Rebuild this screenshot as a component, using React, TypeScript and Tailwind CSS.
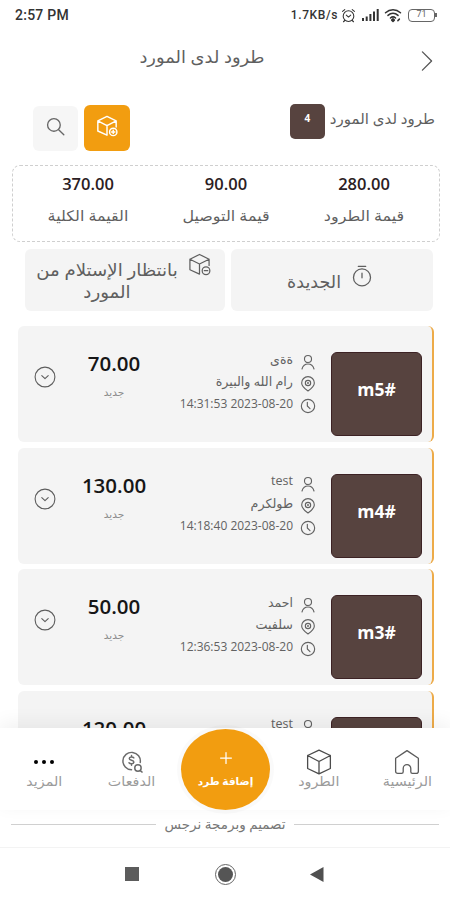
import type { ReactNode } from "react";

interface IParcel {
    id: string;
    customer: string;
    city?: string;
    date?: string;
    price: string;
    status?: string;
}

const parcels: IParcel[] = [
    { id: "#m5", customer: "ةةى", city: "رام الله والبيرة", date: "2023-08-20 14:31:53", price: "70.00", status: "جديد" },
    { id: "#m4", customer: "test", city: "طولكرم", date: "2023-08-20 14:18:40", price: "130.00", status: "جديد" },
    { id: "#m3", customer: "احمد", city: "سلفيت", date: "2023-08-20 12:36:53", price: "50.00", status: "جديد" },
    { id: "", customer: "test", price: "120.00" },
];

const totals = [
    { value: "280.00", label: "قيمة الطرود" },
    { value: "90.00", label: "قيمة التوصيل" },
    { value: "370.00", label: "القيمة الكلية" },
];

function Icon({ className, width = 1.3, children }: { className: string; width?: number; children: ReactNode }) {
    return (
        <svg
            viewBox="0 0 24 24"
            className={`shrink-0 ${className}`}
            fill="none"
            stroke="currentColor"
            strokeWidth={width}
            strokeLinecap="round"
            strokeLinejoin="round"
        >
            {children}
        </svg>
    );
}

function BoxBadgeIcon({ className, minus, width }: { className: string; minus?: boolean; width?: number }) {
    return (
        <Icon className={className} width={width}>
            <path d="M12 22 2 17.5V6.5L12 1.5l10 5V13M2 6.5l10 5 10-5M12 11.5V22" />
            <circle cx="18.8" cy="18.5" r="4" />
            <path d={minus ? "M17 18.5h3.6" : "M17 18.5h3.6M18.8 16.7v3.6"} />
        </Icon>
    );
}

function StatusBar() {
    return (
        <div dir="ltr" className="flex h-[30px] shrink-0 items-center justify-between pr-[13px] pl-[15px] font-['Roboto'] text-[#333]">
            <span className="text-[14px] font-medium tracking-[0.25px]">2:57 PM</span>
            <div className="flex items-center">
                <span className="text-[12px] font-medium tracking-[0.6px]">1.7KB/s</span>
                <Icon className="ml-[3px] size-[15px]" width={1.7}>
                    <circle cx="12" cy="13" r="8.5" />
                    <path d="m8.5 11.5 3.5 3 3.5-3M2.5 5.5 6 2.5M21.500 5.500 18 2.500M6 20l-2 2M18 20l2 2" />
                </Icon>
                <svg viewBox="0 0 17 12" className="ml-[6px] h-[12px] w-[17px]" fill="#333">
                    <path d="M0 9h2v3H0zM3.700 7.500h2v4.500h-2zM7.400 5h2v7h-2zM11 2.500h2v9.500h-2zM14.700 0h2v12h-2z" />
                </svg>
                <Icon className="ml-[5px] size-[18px]" width={2}>
                    <path d="M2 9c6-5.500 14-5.500 20 0M5.300 12.500c4-3.600 9.400-3.600 13.400 0M8.600 16c2-1.800 4.800-1.800 6.800 0" />
                    <path d="m12 17 1.800 1.800L12 20.500l-1.800-1.700z" fill="currentColor" />
                    <path d="m18.500 19.500 2-2" />
                </Icon>
                <div className="ml-[6px] flex h-[13px] w-[27px] items-center justify-center rounded-[4px] border-[1.5px] border-[#666] text-[9px] text-[#666]">
                    71
                </div>
                <div className="h-[4px] w-[2px] bg-[#666]" />
            </div>
        </div>
    );
}

function ParcelCard({ parcel }: { parcel: IParcel }) {
    return (
        <div className="flex h-[116px] shrink-0 rounded-[6px] border-r-2 border-[#edab49] bg-[#f4f4f4]">
            <div className="mt-[26px] mr-[10px] flex h-[84px] w-[91px] shrink-0 items-center justify-center rounded-[6px] border border-[#3c2224] bg-[#57433f] pb-[9px] text-[17.5px] font-bold text-white">
                {parcel.id}
            </div>
            <div className="mt-[23px] mr-[15px] w-[150px] text-[#626262]">
                <div className="flex h-[22px] items-center">
                    <Icon className="mt-[4px] size-[16px]" width={1.7}>
                        <circle cx="12" cy="7.500" r="5.300" />
                        <path d="M3 22.500c1.500-5.500 5-7.500 9-7.500s7.500 2 9 7.500" />
                    </Icon>
                    <span className="mr-[7px] text-[12.5px]">{parcel.customer}</span>
                </div>
                <div className="flex h-[22px] items-center">
                    <Icon className="mt-[4px] size-[16px]" width={1.7}>
                        <path d="M12 22.500C7 19 2.500 15.500 2.500 10.500a9.500 9.500 0 0 1 19 0c0 5-4.500 8.500-9.500 12z" />
                        <circle cx="12" cy="10.500" r="4" />
                        <circle cx="12" cy="10.500" r=".6" />
                    </Icon>
                    <span className="mr-[7px] text-[12.7px] whitespace-nowrap">{parcel.city}</span>
                </div>
                <div className="flex h-[22px] items-center">
                    <Icon className="mt-[4px] size-[16px]" width={1.7}>
                        <circle cx="12" cy="12" r="10" />
                        <path d="M11 6.500V12l4 4" />
                    </Icon>
                    <span className="mr-[7px] text-[12px] whitespace-nowrap">{parcel.date}</span>
                </div>
            </div>
            <div className="mr-[14px] w-[76px] pt-[21px] text-center">
                <div className="h-[32px] text-[20.500px] leading-[32px] font-semibold whitespace-nowrap text-[#161616]">{parcel.price}</div>
                <div className="mt-[4px] text-[10.5px] leading-[18px] text-[#8b8b8b]">{parcel.status}</div>
            </div>
            <Icon className="mt-[40px] mr-auto ml-[16px] size-[22px] text-[#5d5d5d]" width={1.2}>
                <circle cx="12" cy="12" r="10.800" />
                <path d="m8.500 10.500 3.500 3.300 3.500-3.300" />
            </Icon>
        </div>
    );
}

function NavItem({ label, children }: { label: string; children: ReactNode }) {
    return (
        <div className="flex w-[88px] flex-col items-center">
            <div className="flex h-[28px] items-center">{children}</div>
            <span className="-mt-[5px] scale-x-110 text-[13px] leading-[20px] text-[#9b9b9b]">{label}</span>
        </div>
    );
}

function BottomNav() {
    return (
        <nav className="relative z-10 flex h-[82px] shrink-0 bg-white pt-[20px] shadow-[0_-5px_18px_rgba(0,0,0,0.06)]">
            <div className="-mr-px flex w-[178px]">
                <NavItem label="الرئيسية">
                    <Icon className="size-[26px] text-[#5c5c5c]" width={1.2}>
                        <path d="M1.500 8.500 12 1.500l10.500 7v12q0 2-2 2H17q-1.500 0-1.500-1.500v-3a3.500 3.500 0 0 0-7 0v3q0 1.500-1.500 1.500H3.500q-2 0-2-2z" />
                    </Icon>
                </NavItem>
                <NavItem label="الطرود">
                    <Icon className="size-[26px] text-[#4c4c4c]" width={1.2}>
                        <path d="M12 1 22.500 6v12L12 23 1.500 18V6zM1.500 6 12 11.500 22.500 6M12 11.500V23" />
                    </Icon>
                </NavItem>
            </div>
            <div className="w-[97px]">
                <div className="absolute top-px left-[181px] flex h-[81px] w-[89px] flex-col items-center rounded-[50%] bg-[#f29d10] pt-[19px] text-white shadow-[0_0_0_4px_rgba(0,0,0,0.02)]">
                    <Icon className="size-[20px]" width={1.5}>
                        <path d="M12 5.500v13M5.500 12h13" />
                    </Icon>
                    <span className="mt-[3px] text-[10.5px] leading-[20px] font-bold">إضافة طرد</span>
                </div>
            </div>
            <div className="flex w-[176px]">
                <NavItem label="الدفعات">
                    <Icon className="size-[22px] text-[#6b6b6b]" width={1.6}>
                        <path d="M11.500 20.500a9.500 9.500 0 1 1 9.500-8M14 7.500c-1-1.500-5-1.500-5 .8 0 2.200 5 1.500 5 3.700 0 2.500-4 2.500-5.300.8M11.500 5v1.500M11.500 14v1.500" />
                        <circle cx="18.500" cy="18.500" r="3.500" />
                        <path d="m21 21.500 2 1.500" />
                    </Icon>
                </NavItem>
                <NavItem label="المزيد">
                    <div className="-mt-[1px] flex gap-[4px]">
                        <i className="size-[4px] rounded-full bg-black" />
                        <i className="size-[4px] rounded-full bg-black" />
                        <i className="size-[4px] rounded-full bg-black" />
                    </div>
                </NavItem>
            </div>
        </nav>
    );
}

function App() {
    return (
        <div dir="rtl" className="flex h-[900px] w-[450px] flex-col overflow-hidden bg-white font-['Open_Sans','DejaVu_Sans',sans-serif] text-[#5f5f5f]">
            <StatusBar />
            <header className="flex h-[58px] shrink-0 items-center">
                <div className="flex w-[46px] justify-center pt-[3px]">
                    <Icon className="size-[22px] text-[#555]" width={1.4}>
                        <path d="m7 2 10 10L7 22" />
                    </Icon>
                </div>
                <h1 className="flex-1 scale-x-105 pb-[4px] text-center text-[17px]">طرود لدى المورد</h1>
            </header>
            <div className="flex h-[77px] shrink-0 items-start pr-[15px]">
                <span className="mt-[19px] text-[15px] leading-[22px]">طرود لدى المورد</span>
                <div className="mt-[16px] mr-[5px] flex size-[35px] justify-center rounded-[5px] bg-[#57433f] pt-[7px] text-[10px] leading-[14px] font-bold text-white">
                    4
                </div>
                <div className="mt-[17px] mr-auto flex size-[46px] items-center justify-center rounded-[6px] bg-[#f29d10] pb-[4px] text-white">
                    <BoxBadgeIcon className="size-[22px]" width={1.6} />
                </div>
                <div className="mt-[18px] mr-[6px] ml-[33px] flex size-[45px] items-center justify-center rounded-[6px] bg-[#f6f6f6] pb-[5px] text-[#666]">
                    <Icon className="size-[19px]" width={1.7}>
                        <circle cx="10" cy="10" r="8" />
                        <path d="m16 16 6.500 6.500" />
                    </Icon>
                </div>
            </div>
            <div className="mr-[10px] ml-[12px] grid h-[77px] shrink-0 grid-cols-3 rounded-[8px] border border-dashed border-[#cfcfcf] px-[6px] pt-[5px]">
                {totals.map((t) => (
                    <div key={t.label} className="text-center">
                        <div className="text-[16.5px] leading-[26px] font-semibold text-[#2b2023]">{t.value}</div>
                        <div className="mt-[7px] scale-x-110 text-[14.5px] leading-[24px]">{t.label}</div>
                    </div>
                ))}
            </div>
            <div className="mt-[7px] mr-[17px] ml-[25px] flex h-[62px] shrink-0 gap-[6px]">
                <div className="flex w-[202px] items-center rounded-[6px] bg-[#f4f4f4] pr-[60px]">
                    <Icon className="mb-[8px] ml-[10px] size-[22px]" width={1.4}>
                        <circle cx="12" cy="13.500" r="9.300" />
                        <path d="M8 1.500h8M12 9v5" />
                    </Icon>
                    <span className="mt-[2px] text-[17.5px]">الجديدة</span>
                </div>
                <div className="flex flex-1 rounded-[6px] bg-[#f4f4f4] pr-[14px]">
                    <BoxBadgeIcon className="mt-[4px] size-[23px]" minus width={1.3} />
                    <span className="mt-[10px] mr-[8px] w-[146px] scale-x-105 text-center text-[17.3px] leading-[22px]">
                        بانتظار الإستلام من المورد
                    </span>
                </div>
            </div>
            <main className="mt-[15px] mr-[16px] ml-[18px] flex min-h-0 flex-1 flex-col gap-[5.5px] overflow-hidden">
                {parcels.map((p, i) => (
                    <ParcelCard key={i} parcel={p} />
                ))}
            </main>
            <BottomNav />
            <footer className="flex h-[37px] shrink-0 items-center px-[11px] pb-[9px] text-[13.5px] text-[#777]">
                <div className="h-px flex-1 bg-[#d0d0d0]" />
                <span className="px-[8px]">تصميم وبرمجة نرجس</span>
                <div className="h-px flex-1 bg-[#d0d0d0]" />
            </footer>
            <div dir="ltr" className="flex h-[53px] shrink-0 items-center border-t border-[#f3f3f3] pl-[125px]">
                <div className="size-[14px] bg-[#5c5c5c]" />
                <div className="ml-[76px] flex size-[21px] items-center justify-center rounded-full border-[1.5px] border-[#666]">
                    <div className="size-[15px] rounded-full bg-[#555]" />
                </div>
                <svg viewBox="0 0 14 15" className="ml-[74px] h-[15px] w-[14px]" fill="#505050">
                    <path d="M0 7.500 13.500 0v15z" />
                </svg>
            </div>
        </div>
    );
}

export default App;
